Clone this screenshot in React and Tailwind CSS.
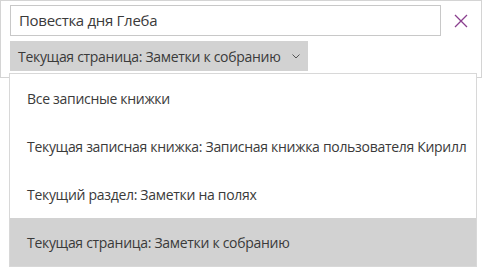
import React from 'react';

const options = [
  'Все записные книжки',
  'Текущая записная книжка: Записная книжка пользователя Кирилл',
  'Текущий раздел: Заметки на полях',
  'Текущая страница: Заметки к собранию',
];

const App = () => {
  return (
    <div
      className="relative w-[482px] h-[267px] bg-white overflow-hidden text-[#3a3a3a]"
      style={{ fontFamily: '"Open Sans", "Noto Sans", sans-serif' }}
    >
      {/* search panel */}
      <div className="w-[482px] h-[78px] border border-[#d4d4d4] pl-[9px] pr-[10px] pt-[4px]">
        <div className="flex items-center">
          <div className="flex items-center h-[31px] w-[431px] border border-[#c8c8c8] pl-[8px] text-[15px] tracking-[-0.3px]">
            Повестка дня Глеба
          </div>
          <button className="ml-[13px] w-[14px] h-[14px] flex items-center justify-center text-[#8a3f8e]">
            <svg width="14" height="14" viewBox="0 0 14 14" fill="none" stroke="currentColor" strokeWidth="1.3">
              <path d="M1 1l12 12M13 1L1 13" />
            </svg>
          </button>
        </div>
        <div className="mt-[5px] inline-flex items-center h-[30px] bg-[#d2d2d2] pl-[8px] pr-[8px] text-[14px] tracking-[-0.3px] whitespace-nowrap">
          <span>Текущая страница: Заметки к собранию</span>
          <svg className="ml-[12px]" width="8" height="5" viewBox="0 0 8 5" fill="none" stroke="#555" strokeWidth="1">
            <path d="M0.5 0.5L4 4L7.5 0.5" />
          </svg>
        </div>
      </div>

      {/* dropdown menu */}
      <div className="absolute left-[9px] top-[73px] w-[468px] border border-[#d8d8d8] bg-white">
        {options.map((o, i) => (
          <div
            key={o}
            className={`h-[48px] flex items-center pl-[17px] text-[14px] tracking-[-0.3px] whitespace-nowrap ${i === 3 ? 'bg-[#d2d2d2]' : ''}`}
          >
            {o}
          </div>
        ))}
      </div>
    </div>
  );
};

export default App;
